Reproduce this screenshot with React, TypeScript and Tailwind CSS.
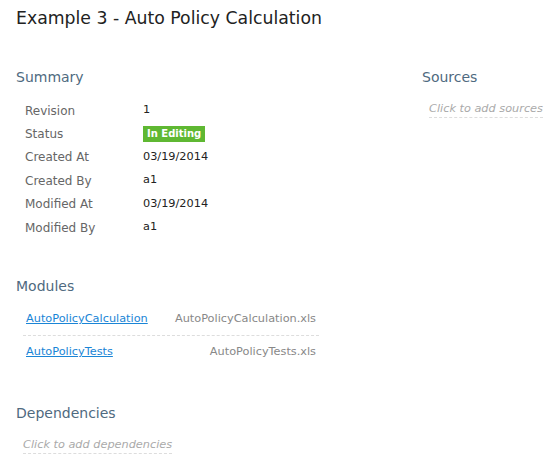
import React from "react";

const rows: { label: string; value: React.ReactNode }[] = [
  { label: "Revision", value: "1" },
  {
    label: "Status",
    value: (
      <span className="inline-block bg-[#5fb832] px-[4px] text-[10px] font-bold leading-[16px] text-white">
        In Editing
      </span>
    ),
  },
  { label: "Created At", value: "03/19/2014" },
  { label: "Created By", value: "a1" },
  { label: "Modified At", value: "03/19/2014" },
  { label: "Modified By", value: "a1" },
];

const modules = [
  { name: "AutoPolicyCalculation", file: "AutoPolicyCalculation.xls" },
  { name: "AutoPolicyTests", file: "AutoPolicyTests.xls" },
];

const Heading = ({ children }: { children: React.ReactNode }) => (
  <h2 className="text-[14px] leading-[18px] text-[#4f6a80]">{children}</h2>
);

const AddLink = ({ children }: { children: React.ReactNode }) => (
  <div className="mt-[16px] pl-[7px] text-[11.3px] leading-[14px]">
    <span className="whitespace-nowrap border-b border-dashed border-[#ddd] pb-[2px] italic text-[#aaa]">
      {children}
    </span>
  </div>
);

export default function App() {
  return (
    <div className="min-h-screen bg-white px-4 pt-2 font-['DejaVu_Sans',Verdana,sans-serif] text-[#333]">
      <h1 className="text-[17.3px] leading-[20px] text-[#222]">Example 3 - Auto Policy Calculation</h1>

      <div className="mt-[40px] flex">
        <div className="w-[406px] shrink-0">
          <Heading>Summary</Heading>
          <div className="mt-[13px] pl-[9px]">
            {rows.map((r) => (
              <div key={r.label} className="flex h-[23.4px] items-center">
                <span className="w-[118px] text-[12px] text-[#666]">{r.label}</span>
                <span className="text-[11.3px] text-[#222]">{r.value}</span>
              </div>
            ))}
          </div>
        </div>
        <div className="shrink-0">
          <Heading>Sources</Heading>
          <AddLink>Click to add sources</AddLink>
        </div>
      </div>

      <div className="mt-[38px]">
        <Heading>Modules</Heading>
        <div className="mt-[9px] w-[303px] pl-[7px]">
          {modules.map((m, i) => (
            <div
              key={m.name}
              className={`flex h-[32px] items-center justify-between px-[3px] ${
                i === 0 ? "border-b border-dashed border-[#ddd]" : ""
              }`}
            >
              <a href="#" className="text-[11.3px] text-[#1a85d6] underline">
                {m.name}
              </a>
              <span className="text-[11.3px] text-[#888]">{m.file}</span>
            </div>
          ))}
        </div>
      </div>

      <div className="mt-[36px]">
        <Heading>Dependencies</Heading>
        <AddLink>Click to add dependencies</AddLink>
      </div>
    </div>
  );
}
